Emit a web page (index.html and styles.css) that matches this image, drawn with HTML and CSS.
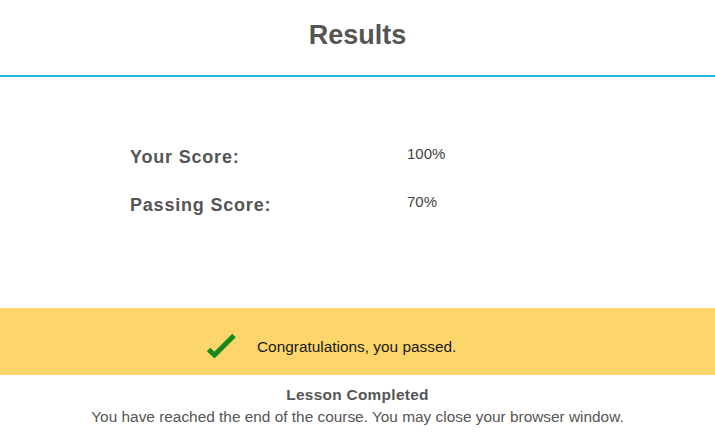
FILE: index.html
```html
<!DOCTYPE html>
<html>
<head>
<meta charset="utf-8">
<link rel="stylesheet" href="styles.css">
</head>
<body>
<header class="header">
  <h1 class="title">Results</h1>
</header>
<section class="scores">
  <div class="row">
    <span class="label">Your Score:</span>
    <span class="value">100%</span>
  </div>
  <div class="row">
    <span class="label">Passing Score:</span>
    <span class="value">70%</span>
  </div>
</section>
<section class="banner">
  <svg class="check" width="30" height="26" viewBox="0 0 30 26">
    <polyline points="2.5,17.5 8.5,23 28,3.5" fill="none" stroke="#178a1f" stroke-width="5" stroke-linejoin="miter" stroke-linecap="butt"/>
  </svg>
  <span class="banner-text">Congratulations, you passed.</span>
</section>
<footer class="footer">
  <div class="footer-title">Lesson Completed</div>
  <div class="footer-text">You have reached the end of the course. You may close your browser window.</div>
</footer>
</body>
</html>
```
FILE: styles.css
```css
html, body {
  margin: 0;
  padding: 0;
  background: #ffffff;
  font-family: "Liberation Sans", Arial, sans-serif;
}
.header {
  height: 77px;
  box-sizing: border-box;
  padding-top: 20px;
  border-bottom: 2px solid #1fb5dd;
  text-align: center;
}
.title {
  margin: 0;
  font-size: 27px;
  line-height: 31px;
  font-weight: bold;
  color: #555555;
}
.scores {
  height: 231px;
  box-sizing: border-box;
  padding: 68px 0 0 130px;
  display: flex;
  flex-direction: column;
  gap: 24px;
}
.row {
  display: grid;
  grid-template-columns: 277px auto;
  align-items: start;
}
.label {
  font-size: 18px;
  line-height: 24px;
  font-weight: bold;
  letter-spacing: 0.8px;
  color: #555555;
}
.value {
  font-size: 15px;
  line-height: 18px;
  color: #444444;
}
.banner {
  height: 67px;
  box-sizing: border-box;
  background: #fdd66b;
  display: flex;
  align-items: flex-start;
  padding: 24px 0 0 206px;
}
.check {
  display: block;
  margin-right: 21px;
}
.banner-text {
  margin-top: 6px;
  font-size: 15.4px;
  line-height: 18px;
  color: #1a1a1a;
}
.footer {
  padding-top: 9px;
  text-align: center;
  font-size: 15.4px;
  line-height: 22px;
  color: #555555;
}
.footer-title {
  font-weight: bold;
  letter-spacing: 0.3px;
}
```
